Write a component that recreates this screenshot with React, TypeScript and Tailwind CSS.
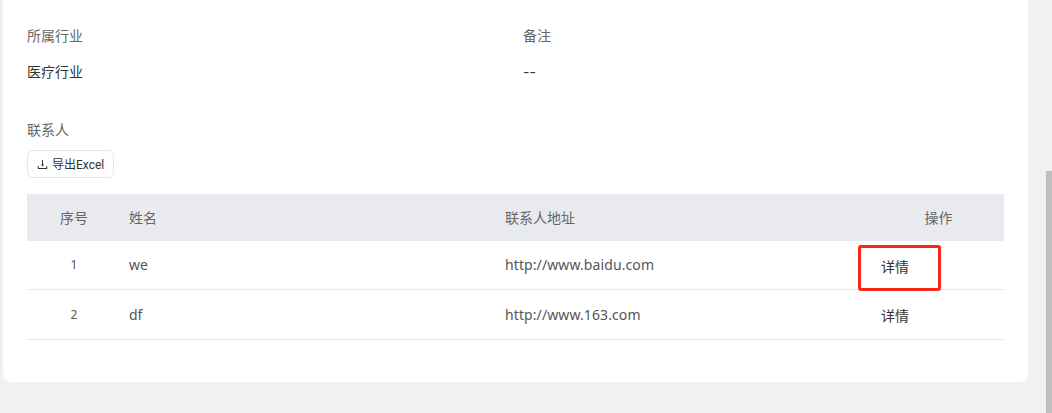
import { AiOutlineDownload } from "react-icons/ai";

const font = "font-['Inter','Noto_Sans_CJK_SC',sans-serif]";

const contacts = [
  { no: 1, name: "we", url: "http://www.baidu.com", height: "h-[49px]" },
  { no: 2, name: "df", url: "http://www.163.com", height: "h-[50px]" },
];

export default function App() {
  return (
    <div className={`${font} flex h-[413px] w-[1052px] overflow-hidden bg-[#f0f1f3]`}>
      <div className="flex-1 pl-[3px] pr-[18px]">
        <div className="h-[382px] rounded-b-lg bg-white px-6 pt-[26px]">
          <div className="grid grid-cols-[496px_1fr] text-sm leading-5 text-[#666]">
            <div>所属行业</div>
            <div>备注</div>
          </div>
          <div className="mt-4 grid grid-cols-[496px_1fr] text-sm leading-5 text-[#333]">
            <div>医疗行业</div>
            <div>--</div>
          </div>
          <div className="mt-[38px] text-sm leading-5 text-[#666]">联系人</div>
          <button className="mt-[10px] flex h-7 w-[87px] items-center gap-[3px] rounded-md border border-[#e5e6e8] bg-white pl-2 font-['Roboto','Noto_Sans_CJK_SC',sans-serif] text-xs text-[#333]">
            <AiOutlineDownload className="text-[13px] text-[#333]" />
            <span className="pt-px">导出Excel</span>
          </button>
          <div className="mt-[16px] w-[977px]">
            <div className="grid h-[47px] grid-cols-[94px_376px_376px_131px] items-center bg-[#e9eaee] text-sm text-[#666]">
              <div className="text-center">序号</div>
              <div className="pl-2">姓名</div>
              <div className="pl-2">联系人地址</div>
              <div className="text-center">操作</div>
            </div>
            {contacts.map((c) => (
              <div
                key={c.no}
                className={`grid ${c.height} grid-cols-[94px_376px_376px_131px] items-center border-b border-[#e8e9eb] font-['Noto_Sans','Noto_Sans_CJK_SC',sans-serif] text-sm text-[#555]`}
              >
                <div className="text-center text-xs">{c.no}</div>
                <div className="pl-2">{c.name}</div>
                <div className="pl-2 tracking-[0.1px]">{c.url}</div>
                <div className="relative pl-2 pt-[3px] text-[#333]">
                  详情
                  {c.no === 1 && (
                    <span className="absolute left-[-15px] top-[-9px] h-[46px] w-[83px] rounded-[3px] border-[3px] border-[#f9261a]" />
                  )}
                </div>
              </div>
            ))}
          </div>
        </div>
      </div>
      <div className="flex w-[6px] flex-col justify-end">
        <div className="h-[242px] bg-[#bfbfbf]" />
      </div>
    </div>
  );
}
